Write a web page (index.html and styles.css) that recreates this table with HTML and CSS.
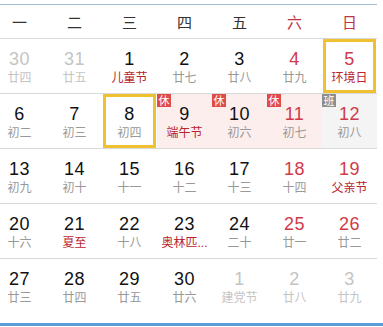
FILE: index.html
```html
<!DOCTYPE html>
<html lang="zh-CN">
<head>
<meta charset="utf-8">
<link rel="stylesheet" href="styles.css">
</head>
<body>
<div class="cal">
  <div class="head">
    <div>一</div><div>二</div><div>三</div><div>四</div><div>五</div><div class="we">六</div><div class="we">日</div>
  </div>
  <div class="row">
    <div class="cell other"><div class="num">30</div><div class="lun">廿四</div></div>
    <div class="cell other"><div class="num">31</div><div class="lun">廿五</div></div>
    <div class="cell"><div class="num">1</div><div class="lun fest">儿童节</div></div>
    <div class="cell"><div class="num">2</div><div class="lun">廿七</div></div>
    <div class="cell"><div class="num">3</div><div class="lun">廿八</div></div>
    <div class="cell we"><div class="num">4</div><div class="lun">廿九</div></div>
    <div class="cell we sel"><div class="num">5</div><div class="lun fest">环境日</div></div>
  </div>
  <div class="row">
    <div class="cell"><div class="num">6</div><div class="lun">初二</div></div>
    <div class="cell"><div class="num">7</div><div class="lun">初三</div></div>
    <div class="cell sel"><div class="num">8</div><div class="lun">初四</div></div>
    <div class="cell rest"><span class="badge">休</span><div class="num">9</div><div class="lun fest">端午节</div></div>
    <div class="cell rest"><span class="badge">休</span><div class="num">10</div><div class="lun">初六</div></div>
    <div class="cell rest we"><span class="badge">休</span><div class="num">11</div><div class="lun">初七</div></div>
    <div class="cell work we"><span class="badge gray">班</span><div class="num">12</div><div class="lun">初八</div></div>
  </div>
  <div class="row">
    <div class="cell"><div class="num">13</div><div class="lun">初九</div></div>
    <div class="cell"><div class="num">14</div><div class="lun">初十</div></div>
    <div class="cell"><div class="num">15</div><div class="lun">十一</div></div>
    <div class="cell"><div class="num">16</div><div class="lun">十二</div></div>
    <div class="cell"><div class="num">17</div><div class="lun">十三</div></div>
    <div class="cell we"><div class="num">18</div><div class="lun">十四</div></div>
    <div class="cell we"><div class="num">19</div><div class="lun fest">父亲节</div></div>
  </div>
  <div class="row">
    <div class="cell"><div class="num">20</div><div class="lun">十六</div></div>
    <div class="cell"><div class="num">21</div><div class="lun fest">夏至</div></div>
    <div class="cell"><div class="num">22</div><div class="lun">十八</div></div>
    <div class="cell"><div class="num">23</div><div class="lun fest">奥林匹...</div></div>
    <div class="cell"><div class="num">24</div><div class="lun">二十</div></div>
    <div class="cell we"><div class="num">25</div><div class="lun">廿一</div></div>
    <div class="cell we"><div class="num">26</div><div class="lun">廿二</div></div>
  </div>
  <div class="row last">
    <div class="cell"><div class="num">27</div><div class="lun">廿三</div></div>
    <div class="cell"><div class="num">28</div><div class="lun">廿四</div></div>
    <div class="cell"><div class="num">29</div><div class="lun">廿五</div></div>
    <div class="cell"><div class="num">30</div><div class="lun">廿六</div></div>
    <div class="cell other"><div class="num">1</div><div class="lun">建党节</div></div>
    <div class="cell other"><div class="num">2</div><div class="lun">廿八</div></div>
    <div class="cell other"><div class="num">3</div><div class="lun">廿九</div></div>
  </div>
</div>
<div class="bar"></div>
</body>
</html>
```
FILE: styles.css
```css
html, body {
  margin: 0;
  padding: 0;
  background: #fff;
}
body {
  width: 383px;
  height: 327px;
  overflow: hidden;
  font-family: "Liberation Sans", "Noto Sans CJK SC", sans-serif;
}
.cal {
  width: 385px;
  margin: 4px 0 0 -8px;
  border-top: 1px solid #a6c1d8;
}
.head {
  display: grid;
  grid-template-columns: repeat(7, 55px);
  height: 34px;
  box-sizing: border-box;
  border-bottom: 1px solid #d9d9d9;
  font-family: "Noto Sans CJK SC", sans-serif;
  font-size: 15px;
  line-height: 33px;
  text-align: center;
  color: #333;
}
.head .we {
  color: #c0353f;
}
.row {
  display: grid;
  grid-template-columns: repeat(7, 55px);
  height: 55px;
  box-sizing: border-box;
  border-bottom: 1px solid #d9d9d9;
}
.row.last {
  border-bottom: none;
  height: 54px;
}
.cell {
  position: relative;
  text-align: center;
  padding-top: 10px;
  box-sizing: border-box;
}
.num {
  font-size: 18px;
  line-height: 20px;
  color: #111;
  letter-spacing: 0.5px;
}
.lun {
  margin-top: 1px;
  font-size: 12px;
  line-height: 16px;
  color: #999;
  white-space: nowrap;
}
.we .num {
  color: #cf3a4a;
}
.lun.fest {
  color: #b8242c;
}
.other .num {
  color: #c4c4c4;
}
.other .lun {
  color: #c4c4c4;
}
.rest {
  background: #fdeeee;
}
.work {
  background: #f4f4f4;
}
.sel::after {
  content: "";
  position: absolute;
  top: 0;
  bottom: 0;
  left: 1px;
  right: 1px;
  border: 3px solid #efc032;
}
.badge {
  position: absolute;
  top: 0;
  left: 0;
  width: 14px;
  height: 13px;
  background: #e04a48;
  color: #fff;
  font-family: "Noto Sans CJK SC", sans-serif;
  font-size: 11px;
  line-height: 13px;
  text-align: center;
}
.badge.gray {
  background: #8e8e8e;
}
.bar {
  height: 3px;
  margin-top: 10px;
  background: #5b9dd6;
}
```
